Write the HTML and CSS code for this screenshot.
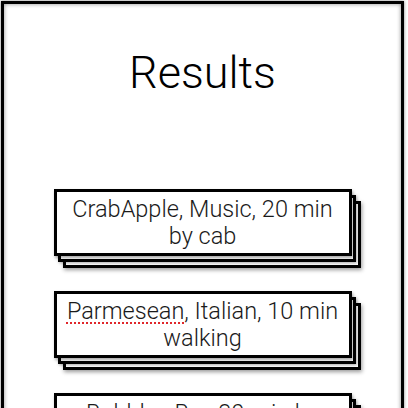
FILE: index.html
```html
<!DOCTYPE html>
<html lang="en">
<head>
    <meta charset="UTF-8">
    <meta name="viewport" content="width=device-width, initial-scale=1.0">
    <title>Results</title>
    <link rel="stylesheet" href="styles.css">
</head>
<body>

    <div class="frame">
        <h1>Results</h1>

        <div class="results">
            <div class="card">CrabApple, Music, 20 min by cab</div>
            <div class="card"><span class="misspelled">Parmesean</span>, Italian, 10 min walking</div>
            <div class="card">Bubbles Bar, 30 min by cab</div>
        </div>
    </div>

</body>
</html>
```

FILE: styles.css
```css
html, body {
    height: 408px;
    overflow: hidden;
}
body {
    margin: 0;
    font-family: Roboto, "Liberation Sans", Arial, sans-serif;
    font-weight: 300;
    background-color: #fff;
}
.frame {
    width: 403px;
    height: 640px;
    margin: 1px 0 0 1px;
    box-sizing: border-box;
    border: 3px solid #000;
    padding-top: 44px;
    box-shadow: 0 0 3px rgba(0, 0, 0, 0.5), inset 0 0 4px rgba(0, 0, 0, 0.45);
}
h1 {
    margin: 0;
    font-size: 45px;
    font-weight: 300;
    line-height: 50px;
    text-align: center;
    color: #000;
}
.results {
    display: flex;
    flex-direction: column;
    align-items: center;
    gap: 35px;
    margin-top: 91px;
}
.card {
    width: 298px;
    box-sizing: border-box;
    border: 3px solid #000;
    padding: 4px 10px 3px 10px;
    background-color: #fff;
    font-size: 23.5px;
    line-height: 27px;
    text-align: center;
    color: #1a1a1a;
    box-shadow:
        1px 2px 3px rgba(0, 0, 0, 0.35),
        4px 6px 0 -3px #fff,
        4px 6px 0 0 #000,
        5px 7px 3px rgba(0, 0, 0, 0.35),
        9px 12px 0 -3px #fff,
        9px 12px 0 0 #000,
        10px 14px 4px rgba(0, 0, 0, 0.4);
}
.misspelled {
    text-decoration: underline dotted #e0262a;
    text-decoration-thickness: 2px;
    text-underline-offset: 3px;
}
```
